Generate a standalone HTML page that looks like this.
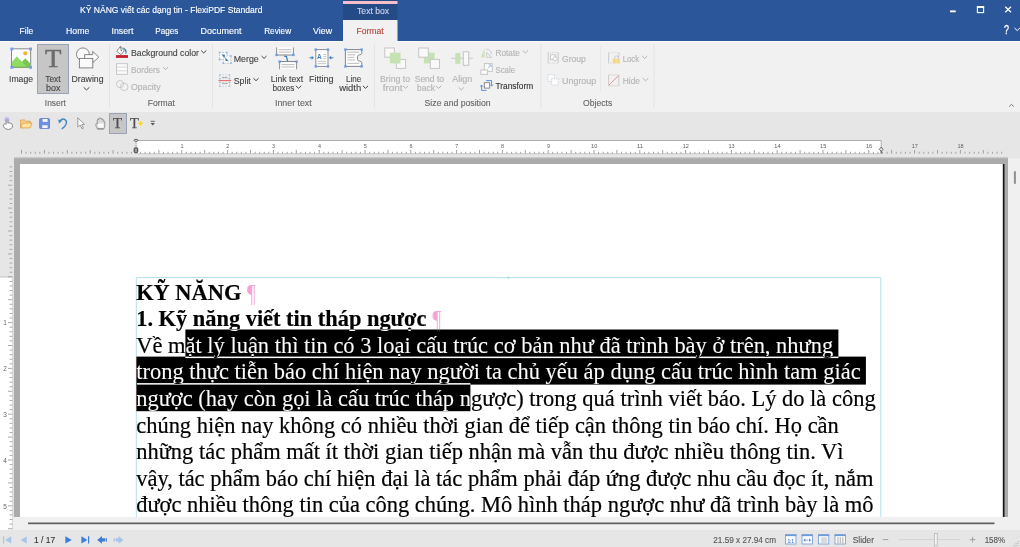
<!DOCTYPE html>
<html lang="vi">
<head>
<meta charset="utf-8">
<title>KỸ NĂNG viết các dạng tin - FlexiPDF Standard</title>
<style>
html,body{margin:0;padding:0;background:#e6e6e6;overflow:hidden}
body{width:1020px;height:547px;font-family:'Liberation Sans', Arial, sans-serif}
svg{display:block;font-family:'Liberation Sans', Arial, sans-serif}
</style>
</head>
<body>
<svg width="1020" height="547" viewBox="0 0 1020 547">
<g id="backgrounds">
<rect x="0" y="0" width="1020" height="547" fill="#e6e6e6"/>
<rect x="0" y="0" width="1020" height="41" fill="#2b579a"/>
<rect x="0" y="41" width="1020" height="71" fill="#f1f1f1"/>
<rect x="0" y="41" width="1020" height="1" fill="#fafafa"/>
</g>
<g id="titlebar">
<rect x="343" y="0" width="54.5" height="20" fill="#254b87"/>
<rect x="343" y="1" width="54.5" height="3" fill="#f4bfca"/>
<rect x="343" y="20" width="54.5" height="22" fill="#f1f1f1"/>
<text x="80.00" y="13.25" font-size="8.6" fill="#ffffff" stroke="#ffffff" stroke-width="0.12" font-weight="normal" textLength="182.40" lengthAdjust="spacingAndGlyphs">KỸ NĂNG viết các dạng tin - FlexiPDF Standard</text>
<text x="357.00" y="13.90" font-size="8.8" fill="#d3d6ee" stroke="#d3d6ee" stroke-width="0.12" font-weight="normal" textLength="32.20" lengthAdjust="spacingAndGlyphs">Text box</text>
<rect x="950.1" y="10.4" width="5.6" height="1.9" fill="#ffffff"/>
<rect x="977.4" y="7.2" width="6.2" height="5.4" fill="none" stroke="#fff" stroke-width="1.1"/>
<rect x="976.85" y="6.0" width="7.3" height="1.8" fill="#ffffff"/>
<path d="M1005.3 6.8 L1011 12.3 M1011 6.8 L1005.3 12.3" stroke="#fff" stroke-width="1.3" fill="none"/>
<text x="1004.00" y="34.40" font-size="12.5" fill="#ffffff" stroke="#ffffff" stroke-width="0.3" font-weight="normal" textLength="5.00" lengthAdjust="spacingAndGlyphs">?</text>
<path d="M1014.80 28.26 L1017.20 30.54 L1019.60 28.26" fill="none" stroke="#ffffff" stroke-width="1.0" stroke-linecap="round" stroke-linejoin="round"/>
</g>
<g id="tabs">
<text x="19.60" y="34.40" font-size="8.8" fill="#ffffff" stroke="#ffffff" stroke-width="0.12" font-weight="normal" textLength="13.70" lengthAdjust="spacingAndGlyphs">File</text>
<text x="66.10" y="34.40" font-size="8.8" fill="#ffffff" stroke="#ffffff" stroke-width="0.12" font-weight="normal" textLength="23.20" lengthAdjust="spacingAndGlyphs">Home</text>
<text x="111.50" y="34.40" font-size="8.8" fill="#ffffff" stroke="#ffffff" stroke-width="0.12" font-weight="normal" textLength="21.90" lengthAdjust="spacingAndGlyphs">Insert</text>
<text x="155.30" y="34.40" font-size="8.8" fill="#ffffff" stroke="#ffffff" stroke-width="0.12" font-weight="normal" textLength="23.10" lengthAdjust="spacingAndGlyphs">Pages</text>
<text x="200.60" y="34.40" font-size="8.8" fill="#ffffff" stroke="#ffffff" stroke-width="0.12" font-weight="normal" textLength="40.90" lengthAdjust="spacingAndGlyphs">Document</text>
<text x="264.20" y="34.40" font-size="8.8" fill="#ffffff" stroke="#ffffff" stroke-width="0.12" font-weight="normal" textLength="26.90" lengthAdjust="spacingAndGlyphs">Review</text>
<text x="313.10" y="34.40" font-size="8.8" fill="#ffffff" stroke="#ffffff" stroke-width="0.12" font-weight="normal" textLength="19.00" lengthAdjust="spacingAndGlyphs">View</text>
<text x="356.40" y="34.20" font-size="8.8" fill="#b5453c" stroke="#b5453c" stroke-width="0.12" font-weight="normal" textLength="27.40" lengthAdjust="spacingAndGlyphs">Format</text>
</g>
<g id="ribbon">
<line x1="109.5" y1="44" x2="109.5" y2="108" stroke="#e4e4e4" stroke-width="1"/>
<line x1="212.5" y1="44" x2="212.5" y2="108" stroke="#e4e4e4" stroke-width="1"/>
<line x1="374.4" y1="44" x2="374.4" y2="108" stroke="#e4e4e4" stroke-width="1"/>
<line x1="540.8" y1="44" x2="540.8" y2="108" stroke="#e4e4e4" stroke-width="1"/>
<line x1="654.0" y1="44" x2="654.0" y2="108" stroke="#e4e4e4" stroke-width="1"/>
<line x1="600.6" y1="46" x2="600.6" y2="91" stroke="#e6e6e6" stroke-width="1"/>
<rect x="37.5" y="44.5" width="31" height="49" fill="#c6c6c6" stroke="#9ba4b7" stroke-width="1"/>
<text x="9.00" y="82.20" font-size="8.7" fill="#444444" stroke="#444444" stroke-width="0.12" font-weight="normal" textLength="24.00" lengthAdjust="spacingAndGlyphs">Image</text>
<text x="45.20" y="82.20" font-size="8.7" fill="#444444" stroke="#444444" stroke-width="0.12" font-weight="normal" textLength="15.50" lengthAdjust="spacingAndGlyphs">Text</text>
<text x="46.00" y="91.00" font-size="8.7" fill="#444444" stroke="#444444" stroke-width="0.12" font-weight="normal" textLength="14.40" lengthAdjust="spacingAndGlyphs">box</text>
<text x="71.60" y="82.20" font-size="8.7" fill="#444444" stroke="#444444" stroke-width="0.12" font-weight="normal" textLength="31.90" lengthAdjust="spacingAndGlyphs">Drawing</text>
<path d="M84.00 87.61 L86.50 89.99 L89.00 87.61" fill="none" stroke="#444444" stroke-width="1.0" stroke-linecap="round" stroke-linejoin="round"/>
<text x="44.80" y="106.10" font-size="8.7" fill="#666666" stroke="#666666" stroke-width="0.12" font-weight="normal" textLength="21.00" lengthAdjust="spacingAndGlyphs">Insert</text>
<text x="131.00" y="55.80" font-size="8.7" fill="#444444" stroke="#444444" stroke-width="0.12" font-weight="normal" textLength="68.00" lengthAdjust="spacingAndGlyphs">Background color</text>
<path d="M201.40 50.81 L203.70 52.99 L206.00 50.81" fill="none" stroke="#444444" stroke-width="1.0" stroke-linecap="round" stroke-linejoin="round"/>
<text x="131.00" y="72.60" font-size="8.7" fill="#b3b3b3" stroke="#b3b3b3" stroke-width="0.12" font-weight="normal" textLength="29.00" lengthAdjust="spacingAndGlyphs">Borders</text>
<path d="M163.40 67.50 L165.50 69.50 L167.60 67.50" fill="none" stroke="#b3b3b3" stroke-width="1.0" stroke-linecap="round" stroke-linejoin="round"/>
<text x="131.00" y="89.70" font-size="8.7" fill="#b3b3b3" stroke="#b3b3b3" stroke-width="0.12" font-weight="normal" textLength="29.50" lengthAdjust="spacingAndGlyphs">Opacity</text>
<text x="147.80" y="106.10" font-size="8.7" fill="#666666" stroke="#666666" stroke-width="0.12" font-weight="normal" textLength="27.00" lengthAdjust="spacingAndGlyphs">Format</text>
<text x="233.70" y="61.60" font-size="8.7" fill="#444444" stroke="#444444" stroke-width="0.12" font-weight="normal" textLength="25.00" lengthAdjust="spacingAndGlyphs">Merge</text>
<path d="M261.90 56.38 L264.05 58.42 L266.20 56.38" fill="none" stroke="#444444" stroke-width="1.0" stroke-linecap="round" stroke-linejoin="round"/>
<text x="233.70" y="83.80" font-size="8.7" fill="#444444" stroke="#444444" stroke-width="0.12" font-weight="normal" textLength="17.10" lengthAdjust="spacingAndGlyphs">Split</text>
<path d="M253.70 78.51 L256.00 80.69 L258.30 78.51" fill="none" stroke="#444444" stroke-width="1.0" stroke-linecap="round" stroke-linejoin="round"/>
<text x="270.80" y="82.20" font-size="8.7" fill="#444444" stroke="#444444" stroke-width="0.12" font-weight="normal" textLength="32.30" lengthAdjust="spacingAndGlyphs">Link text</text>
<text x="272.40" y="91.00" font-size="8.7" fill="#444444" stroke="#444444" stroke-width="0.12" font-weight="normal" textLength="22.10" lengthAdjust="spacingAndGlyphs">boxes</text>
<path d="M296.10 86.06 L298.50 88.34 L300.90 86.06" fill="none" stroke="#444444" stroke-width="1.0" stroke-linecap="round" stroke-linejoin="round"/>
<text x="309.00" y="82.20" font-size="8.7" fill="#444444" stroke="#444444" stroke-width="0.12" font-weight="normal" textLength="24.60" lengthAdjust="spacingAndGlyphs">Fitting</text>
<text x="346.00" y="82.20" font-size="8.7" fill="#444444" stroke="#444444" stroke-width="0.12" font-weight="normal" textLength="15.20" lengthAdjust="spacingAndGlyphs">Line</text>
<text x="339.20" y="91.00" font-size="8.7" fill="#444444" stroke="#444444" stroke-width="0.12" font-weight="normal" textLength="22.00" lengthAdjust="spacingAndGlyphs">width</text>
<path d="M363.20 86.11 L365.50 88.29 L367.80 86.11" fill="none" stroke="#444444" stroke-width="1.0" stroke-linecap="round" stroke-linejoin="round"/>
<text x="275.00" y="106.10" font-size="8.7" fill="#666666" stroke="#666666" stroke-width="0.12" font-weight="normal" textLength="36.70" lengthAdjust="spacingAndGlyphs">Inner text</text>
<text x="380.00" y="82.20" font-size="8.7" fill="#b3b3b3" stroke="#b3b3b3" stroke-width="0.12" font-weight="normal" textLength="30.00" lengthAdjust="spacingAndGlyphs">Bring to</text>
<text x="382.70" y="91.00" font-size="8.7" fill="#b3b3b3" stroke="#b3b3b3" stroke-width="0.12" font-weight="normal" textLength="19.80" lengthAdjust="spacingAndGlyphs">front</text>
<path d="M403.40 86.18 L405.55 88.22 L407.70 86.18" fill="none" stroke="#b3b3b3" stroke-width="1.0" stroke-linecap="round" stroke-linejoin="round"/>
<text x="414.70" y="82.20" font-size="8.7" fill="#b3b3b3" stroke="#b3b3b3" stroke-width="0.12" font-weight="normal" textLength="29.40" lengthAdjust="spacingAndGlyphs">Send to</text>
<text x="417.10" y="91.00" font-size="8.7" fill="#b3b3b3" stroke="#b3b3b3" stroke-width="0.12" font-weight="normal" textLength="17.80" lengthAdjust="spacingAndGlyphs">back</text>
<path d="M436.20 86.06 L438.60 88.34 L441.00 86.06" fill="none" stroke="#b3b3b3" stroke-width="1.0" stroke-linecap="round" stroke-linejoin="round"/>
<text x="452.30" y="82.20" font-size="8.7" fill="#b3b3b3" stroke="#b3b3b3" stroke-width="0.12" font-weight="normal" textLength="19.90" lengthAdjust="spacingAndGlyphs">Align</text>
<path d="M458.90 87.68 L461.25 89.92 L463.60 87.68" fill="none" stroke="#b3b3b3" stroke-width="1.0" stroke-linecap="round" stroke-linejoin="round"/>
<text x="495.50" y="55.80" font-size="8.7" fill="#b3b3b3" stroke="#b3b3b3" stroke-width="0.12" font-weight="normal" textLength="24.30" lengthAdjust="spacingAndGlyphs">Rotate</text>
<path d="M523.00 50.78 L525.35 53.02 L527.70 50.78" fill="none" stroke="#b3b3b3" stroke-width="1.0" stroke-linecap="round" stroke-linejoin="round"/>
<text x="495.50" y="72.60" font-size="8.7" fill="#b3b3b3" stroke="#b3b3b3" stroke-width="0.12" font-weight="normal" textLength="19.50" lengthAdjust="spacingAndGlyphs">Scale</text>
<text x="495.50" y="89.30" font-size="8.7" fill="#333" stroke="#333" stroke-width="0.12" font-weight="normal" textLength="37.70" lengthAdjust="spacingAndGlyphs">Transform</text>
<text x="424.60" y="106.10" font-size="8.7" fill="#666666" stroke="#666666" stroke-width="0.12" font-weight="normal" textLength="66.00" lengthAdjust="spacingAndGlyphs">Size and position</text>
<text x="562.10" y="61.60" font-size="8.7" fill="#b3b3b3" stroke="#b3b3b3" stroke-width="0.12" font-weight="normal" textLength="23.70" lengthAdjust="spacingAndGlyphs">Group</text>
<text x="562.10" y="83.80" font-size="8.7" fill="#b3b3b3" stroke="#b3b3b3" stroke-width="0.12" font-weight="normal" textLength="34.10" lengthAdjust="spacingAndGlyphs">Ungroup</text>
<text x="622.70" y="61.60" font-size="8.7" fill="#b3b3b3" stroke="#b3b3b3" stroke-width="0.12" font-weight="normal" textLength="16.50" lengthAdjust="spacingAndGlyphs">Lock</text>
<path d="M642.50 56.33 L644.75 58.47 L647.00 56.33" fill="none" stroke="#b3b3b3" stroke-width="1.0" stroke-linecap="round" stroke-linejoin="round"/>
<text x="622.70" y="83.80" font-size="8.7" fill="#b3b3b3" stroke="#b3b3b3" stroke-width="0.12" font-weight="normal" textLength="17.30" lengthAdjust="spacingAndGlyphs">Hide</text>
<path d="M643.00 78.41 L645.50 80.79 L648.00 78.41" fill="none" stroke="#b3b3b3" stroke-width="1.0" stroke-linecap="round" stroke-linejoin="round"/>
<text x="583.00" y="106.10" font-size="8.7" fill="#666666" stroke="#666666" stroke-width="0.12" font-weight="normal" textLength="29.20" lengthAdjust="spacingAndGlyphs">Objects</text>
<path d="M1009.2 106.6 L1011.5 104.4 L1013.8 106.6" fill="none" stroke="#666" stroke-width="0.9"/>
</g>
<g id="quickbar">
<rect x="109.5" y="113.5" width="17" height="20" fill="#c6c6c6" stroke="#9ba4b7" stroke-width="1"/>
</g>
<g id="rulers">
<rect x="137.3" y="140.5" width="743.9" height="13.2" fill="#ffffff"/>
<path d="M137.3 140.5 H881.2 V153.7" fill="none" stroke="#9a9a9a" stroke-width="0.8"/>
<path d="M137.3 153.7 H881.2" fill="none" stroke="#b4b4b4" stroke-width="0.7"/>
<path d="M21.50 150.0V153.6M26.08 151.8V153.6M30.66 151.8V153.6M35.24 151.8V153.6M39.82 151.8V153.6M44.40 150.0V153.6M48.98 151.8V153.6M53.56 151.8V153.6M58.14 151.8V153.6M62.72 151.8V153.6M67.30 150.0V153.6M71.88 151.8V153.6M76.46 151.8V153.6M81.04 151.8V153.6M85.62 151.8V153.6M90.20 150.0V153.6M94.78 151.8V153.6M99.36 151.8V153.6M103.94 151.8V153.6M108.52 151.8V153.6M113.10 150.0V153.6M117.68 151.8V153.6M122.26 151.8V153.6M126.84 151.8V153.6M131.42 151.8V153.6M136.00 150.0V153.6M140.58 151.8V153.6M145.16 151.8V153.6M149.74 151.8V153.6M154.32 151.8V153.6M158.90 150.0V153.6M163.48 151.8V153.6M168.06 151.8V153.6M172.64 151.8V153.6M177.22 151.8V153.6M181.80 150.0V153.6M186.38 151.8V153.6M190.96 151.8V153.6M195.54 151.8V153.6M200.12 151.8V153.6M204.70 150.0V153.6M209.28 151.8V153.6M213.86 151.8V153.6M218.44 151.8V153.6M223.02 151.8V153.6M227.60 150.0V153.6M232.18 151.8V153.6M236.76 151.8V153.6M241.34 151.8V153.6M245.92 151.8V153.6M250.50 150.0V153.6M255.08 151.8V153.6M259.66 151.8V153.6M264.24 151.8V153.6M268.82 151.8V153.6M273.40 150.0V153.6M277.98 151.8V153.6M282.56 151.8V153.6M287.14 151.8V153.6M291.72 151.8V153.6M296.30 150.0V153.6M300.88 151.8V153.6M305.46 151.8V153.6M310.04 151.8V153.6M314.62 151.8V153.6M319.20 150.0V153.6M323.78 151.8V153.6M328.36 151.8V153.6M332.94 151.8V153.6M337.52 151.8V153.6M342.10 150.0V153.6M346.68 151.8V153.6M351.26 151.8V153.6M355.84 151.8V153.6M360.42 151.8V153.6M365.00 150.0V153.6M369.58 151.8V153.6M374.16 151.8V153.6M378.74 151.8V153.6M383.32 151.8V153.6M387.90 150.0V153.6M392.48 151.8V153.6M397.06 151.8V153.6M401.64 151.8V153.6M406.22 151.8V153.6M410.80 150.0V153.6M415.38 151.8V153.6M419.96 151.8V153.6M424.54 151.8V153.6M429.12 151.8V153.6M433.70 150.0V153.6M438.28 151.8V153.6M442.86 151.8V153.6M447.44 151.8V153.6M452.02 151.8V153.6M456.60 150.0V153.6M461.18 151.8V153.6M465.76 151.8V153.6M470.34 151.8V153.6M474.92 151.8V153.6M479.50 150.0V153.6M484.08 151.8V153.6M488.66 151.8V153.6M493.24 151.8V153.6M497.82 151.8V153.6M502.40 150.0V153.6M506.98 151.8V153.6M511.56 151.8V153.6M516.14 151.8V153.6M520.72 151.8V153.6M525.30 150.0V153.6M529.88 151.8V153.6M534.46 151.8V153.6M539.04 151.8V153.6M543.62 151.8V153.6M548.20 150.0V153.6M552.78 151.8V153.6M557.36 151.8V153.6M561.94 151.8V153.6M566.52 151.8V153.6M571.10 150.0V153.6M575.68 151.8V153.6M580.26 151.8V153.6M584.84 151.8V153.6M589.42 151.8V153.6M594.00 150.0V153.6M598.58 151.8V153.6M603.16 151.8V153.6M607.74 151.8V153.6M612.32 151.8V153.6M616.90 150.0V153.6M621.48 151.8V153.6M626.06 151.8V153.6M630.64 151.8V153.6M635.22 151.8V153.6M639.80 150.0V153.6M644.38 151.8V153.6M648.96 151.8V153.6M653.54 151.8V153.6M658.12 151.8V153.6M662.70 150.0V153.6M667.28 151.8V153.6M671.86 151.8V153.6M676.44 151.8V153.6M681.02 151.8V153.6M685.60 150.0V153.6M690.18 151.8V153.6M694.76 151.8V153.6M699.34 151.8V153.6M703.92 151.8V153.6M708.50 150.0V153.6M713.08 151.8V153.6M717.66 151.8V153.6M722.24 151.8V153.6M726.82 151.8V153.6M731.40 150.0V153.6M735.98 151.8V153.6M740.56 151.8V153.6M745.14 151.8V153.6M749.72 151.8V153.6M754.30 150.0V153.6M758.88 151.8V153.6M763.46 151.8V153.6M768.04 151.8V153.6M772.62 151.8V153.6M777.20 150.0V153.6M781.78 151.8V153.6M786.36 151.8V153.6M790.94 151.8V153.6M795.52 151.8V153.6M800.10 150.0V153.6M804.68 151.8V153.6M809.26 151.8V153.6M813.84 151.8V153.6M818.42 151.8V153.6M823.00 150.0V153.6M827.58 151.8V153.6M832.16 151.8V153.6M836.74 151.8V153.6M841.32 151.8V153.6M845.90 150.0V153.6M850.48 151.8V153.6M855.06 151.8V153.6M859.64 151.8V153.6M864.22 151.8V153.6M868.80 150.0V153.6M873.38 151.8V153.6M877.96 151.8V153.6M882.54 151.8V153.6M887.12 151.8V153.6M891.70 150.0V153.6M896.28 151.8V153.6M900.86 151.8V153.6M905.44 151.8V153.6M910.02 151.8V153.6M914.60 150.0V153.6M919.18 151.8V153.6M923.76 151.8V153.6M928.34 151.8V153.6M932.92 151.8V153.6M937.50 150.0V153.6M942.08 151.8V153.6M946.66 151.8V153.6M951.24 151.8V153.6M955.82 151.8V153.6M960.40 150.0V153.6M964.98 151.8V153.6M969.56 151.8V153.6M974.14 151.8V153.6M978.72 151.8V153.6M983.30 150.0V153.6M987.88 151.8V153.6M992.46 151.8V153.6M997.04 151.8V153.6M1001.62 151.8V153.6" stroke="#959595" stroke-width="0.9" fill="none"/>
<text x="180.50" y="148.20" font-size="6.2" fill="#5c5c5c" font-weight="normal" textLength="3.00" lengthAdjust="spacingAndGlyphs">1</text>
<text x="226.30" y="148.20" font-size="6.2" fill="#5c5c5c" font-weight="normal" textLength="3.00" lengthAdjust="spacingAndGlyphs">2</text>
<text x="272.10" y="148.20" font-size="6.2" fill="#5c5c5c" font-weight="normal" textLength="3.00" lengthAdjust="spacingAndGlyphs">3</text>
<text x="317.90" y="148.20" font-size="6.2" fill="#5c5c5c" font-weight="normal" textLength="3.00" lengthAdjust="spacingAndGlyphs">4</text>
<text x="363.70" y="148.20" font-size="6.2" fill="#5c5c5c" font-weight="normal" textLength="3.00" lengthAdjust="spacingAndGlyphs">5</text>
<text x="409.50" y="148.20" font-size="6.2" fill="#5c5c5c" font-weight="normal" textLength="3.00" lengthAdjust="spacingAndGlyphs">6</text>
<text x="455.30" y="148.20" font-size="6.2" fill="#5c5c5c" font-weight="normal" textLength="3.00" lengthAdjust="spacingAndGlyphs">7</text>
<text x="501.10" y="148.20" font-size="6.2" fill="#5c5c5c" font-weight="normal" textLength="3.00" lengthAdjust="spacingAndGlyphs">8</text>
<text x="546.90" y="148.20" font-size="6.2" fill="#5c5c5c" font-weight="normal" textLength="3.00" lengthAdjust="spacingAndGlyphs">9</text>
<text x="591.10" y="148.20" font-size="6.2" fill="#5c5c5c" font-weight="normal" textLength="6.20" lengthAdjust="spacingAndGlyphs">10</text>
<text x="636.90" y="148.20" font-size="6.2" fill="#5c5c5c" font-weight="normal" textLength="6.20" lengthAdjust="spacingAndGlyphs">11</text>
<text x="682.70" y="148.20" font-size="6.2" fill="#5c5c5c" font-weight="normal" textLength="6.20" lengthAdjust="spacingAndGlyphs">12</text>
<text x="728.50" y="148.20" font-size="6.2" fill="#5c5c5c" font-weight="normal" textLength="6.20" lengthAdjust="spacingAndGlyphs">13</text>
<text x="774.30" y="148.20" font-size="6.2" fill="#5c5c5c" font-weight="normal" textLength="6.20" lengthAdjust="spacingAndGlyphs">14</text>
<text x="820.10" y="148.20" font-size="6.2" fill="#5c5c5c" font-weight="normal" textLength="6.20" lengthAdjust="spacingAndGlyphs">15</text>
<text x="865.90" y="148.20" font-size="6.2" fill="#5c5c5c" font-weight="normal" textLength="6.20" lengthAdjust="spacingAndGlyphs">16</text>
<text x="911.70" y="148.20" font-size="6.2" fill="#5c5c5c" font-weight="normal" textLength="6.20" lengthAdjust="spacingAndGlyphs">17</text>
<text x="957.50" y="148.20" font-size="6.2" fill="#5c5c5c" font-weight="normal" textLength="6.20" lengthAdjust="spacingAndGlyphs">18</text>
<rect x="0" y="277" width="12.5" height="253" fill="#ffffff"/>
<line x1="12.7" y1="277" x2="12.7" y2="530" stroke="#c9c9c9" stroke-width="0.8"/>
<line x1="0" y1="277" x2="12.7" y2="277" stroke="#b5b5b5" stroke-width="0.8"/>
<path d="M9.6 166.88H12.3M9.6 171.46H12.3M9.6 176.04H12.3M9.6 180.62H12.3M8.0 185.20H12.3M9.6 189.78H12.3M9.6 194.36H12.3M9.6 198.94H12.3M9.6 203.52H12.3M8.0 208.10H12.3M9.6 212.68H12.3M9.6 217.26H12.3M9.6 221.84H12.3M9.6 226.42H12.3M8.0 231.00H12.3M9.6 235.58H12.3M9.6 240.16H12.3M9.6 244.74H12.3M9.6 249.32H12.3M8.0 253.90H12.3M9.6 258.48H12.3M9.6 263.06H12.3M9.6 267.64H12.3M9.6 272.22H12.3M8.0 276.80H12.3M9.6 281.38H12.3M9.6 285.96H12.3M9.6 290.54H12.3M9.6 295.12H12.3M8.0 299.70H12.3M9.6 304.28H12.3M9.6 308.86H12.3M9.6 313.44H12.3M9.6 318.02H12.3M8.0 322.60H12.3M9.6 327.18H12.3M9.6 331.76H12.3M9.6 336.34H12.3M9.6 340.92H12.3M8.0 345.50H12.3M9.6 350.08H12.3M9.6 354.66H12.3M9.6 359.24H12.3M9.6 363.82H12.3M8.0 368.40H12.3M9.6 372.98H12.3M9.6 377.56H12.3M9.6 382.14H12.3M9.6 386.72H12.3M8.0 391.30H12.3M9.6 395.88H12.3M9.6 400.46H12.3M9.6 405.04H12.3M9.6 409.62H12.3M8.0 414.20H12.3M9.6 418.78H12.3M9.6 423.36H12.3M9.6 427.94H12.3M9.6 432.52H12.3M8.0 437.10H12.3M9.6 441.68H12.3M9.6 446.26H12.3M9.6 450.84H12.3M9.6 455.42H12.3M8.0 460.00H12.3M9.6 464.58H12.3M9.6 469.16H12.3M9.6 473.74H12.3M9.6 478.32H12.3M8.0 482.90H12.3M9.6 487.48H12.3M9.6 492.06H12.3M9.6 496.64H12.3M9.6 501.22H12.3M8.0 505.80H12.3M9.6 510.38H12.3M9.6 514.96H12.3M9.6 519.54H12.3M9.6 524.12H12.3M8.0 528.70H12.3" stroke="#a0a0a0" stroke-width="0.9" fill="none"/>
<text x="3.20" y="325.30" font-size="6.6" fill="#666" font-weight="normal" textLength="3.60" lengthAdjust="spacingAndGlyphs">1</text>
<text x="3.20" y="371.10" font-size="6.6" fill="#666" font-weight="normal" textLength="3.60" lengthAdjust="spacingAndGlyphs">2</text>
<text x="3.20" y="416.90" font-size="6.6" fill="#666" font-weight="normal" textLength="3.60" lengthAdjust="spacingAndGlyphs">3</text>
<text x="3.20" y="462.70" font-size="6.6" fill="#666" font-weight="normal" textLength="3.60" lengthAdjust="spacingAndGlyphs">4</text>
<text x="3.20" y="508.50" font-size="6.6" fill="#666" font-weight="normal" textLength="3.60" lengthAdjust="spacingAndGlyphs">5</text>
</g>
<g id="document">
<rect x="14" y="157.5" width="994" height="360" fill="#ababab"/>
<rect x="14" y="157.5" width="994" height="0.8" fill="#c9c9c9"/>
<rect x="20" y="164" width="983" height="353" fill="#ffffff"/>
<rect x="1002.8" y="164" width="1.7" height="353" fill="#161616"/>
<rect x="1008" y="158.5" width="12" height="372" fill="#f0f0f0"/>
<rect x="1013.9" y="171.2" width="2.0" height="12.6" fill="#8f8f8f"/>
<rect x="13.2" y="517" width="1007" height="13" fill="#f0f0f0"/>
<rect x="28" y="522.5" width="966.5" height="1.7" fill="#5e5e5e"/>
<path d="M136.3 517 V277.6 H880.8 V517" fill="none" stroke="#b5e0e8" stroke-width="1"/>
<circle cx="508.5" cy="277.6" r="1.3" fill="#b5e0e8"/>
</g>
<g id="doctext" font-family="'Liberation Serif', 'Times New Roman', serif" font-size="22.475" fill="#000" stroke="#000" stroke-width="0.18">
<text x="136.2" y="300.4" font-weight="bold" font-size="22.4" xml:space="preserve">KỸ NĂNG</text>
<text transform="translate(247.0 301.50) scale(0.86 1.1)" fill="#f5a3d6" stroke="none">¶</text>
<text x="136.2" y="326.1" font-weight="bold" font-size="22.4" xml:space="preserve">1. Kỹ năng viết tin tháp ngược</text>
<text transform="translate(432.4 327.90) scale(0.86 1.1)" fill="#f5a3d6" stroke="none">¶</text>
<text x="136.2" y="352.8" font-weight="normal" xml:space="preserve">Về mặt lý luận thì tin có 3 loại cấu trúc cơ bản như đã trình bày ở trên, nhưng</text>
<text x="136.2" y="379.4" font-weight="normal" xml:space="preserve">trong thực tiễn báo chí hiện nay người ta chủ yếu áp dụng cấu trúc hình tam giác</text>
<text x="136.2" y="406.0" font-weight="normal" xml:space="preserve">ngược (hay còn gọi là cấu trúc tháp ngược) trong quá trình viết báo. Lý do là công</text>
<text x="136.2" y="432.6" font-weight="normal" xml:space="preserve">chúng hiện nay không có nhiều thời gian để tiếp cận thông tin báo chí. Họ cần</text>
<text x="136.2" y="459.2" font-weight="normal" xml:space="preserve">những tác phẩm mất ít thời gian tiếp nhận mà vẫn thu được nhiều thông tin. Vì</text>
<text x="136.2" y="485.7" font-weight="normal" xml:space="preserve">vậy, tác phẩm báo chí hiện đại là tác phẩm phải đáp ứng được nhu cầu đọc ít, nắm</text>
<text x="136.2" y="512.3" font-weight="normal" xml:space="preserve">được nhiều thông tin của công chúng. Mô hình tháp ngược như đã trình bày là mô</text>
</g>
<g id="selection" fill="#fff" style="mix-blend-mode:difference">
<rect x="185.4" y="329.5" width="653.0" height="28.6" style="mix-blend-mode:difference"/>
<rect x="136.3" y="356.6" width="729.6" height="28.0" style="mix-blend-mode:difference"/>
<rect x="136.3" y="383.1" width="334.1" height="28.1" style="mix-blend-mode:difference"/>
</g>
<g id="bottom">
<rect x="13.2" y="517" width="1007" height="13" fill="#f0f0f0"/>
<rect x="28" y="522.5" width="966.5" height="1.7" fill="#5e5e5e"/>
<rect x="0" y="530" width="1020" height="17" fill="#e6e6e6"/>
<text x="34.00" y="543.10" font-size="8.4" fill="#333" stroke="#333" stroke-width="0.12" font-weight="normal" textLength="21.20" lengthAdjust="spacingAndGlyphs">1 / 17</text>
<text x="713.30" y="543.10" font-size="8.4" fill="#555" stroke="#555" stroke-width="0.12" font-weight="normal" textLength="62.70" lengthAdjust="spacingAndGlyphs">21.59 x 27.94 cm</text>
<text x="852.80" y="543.10" font-size="8.4" fill="#555" stroke="#555" stroke-width="0.12" font-weight="normal" textLength="21.20" lengthAdjust="spacingAndGlyphs">Slider</text>
<text x="984.70" y="543.10" font-size="8.4" fill="#555" stroke="#555" stroke-width="0.12" font-weight="normal" textLength="20.40" lengthAdjust="spacingAndGlyphs">158%</text>
</g>
<g id="icons">
<rect x="11.5" y="48.8" width="19.2" height="18.6" fill="#fff" stroke="#8a8a8a" stroke-width="1"/>
<path d="M12 67 L12 62 L16.9 56.2 L22 62 L25.3 58.6 L30.2 63.6 L30.2 67 Z" fill="#8fdc62"/>
<path d="M22 62 L25.3 58.6 L30.2 63.6 L30.2 67 L27 67 Z" fill="#79c653"/>
<rect x="12.5" y="66.6" width="17.5" height="1" fill="#78b85a"/>
<circle cx="25.3" cy="53.3" r="2.1" fill="#f6b23c"/>
<rect x="10.35" y="47.55" width="2.9" height="2.9" fill="#739fe6"/>
<rect x="29.05" y="47.55" width="2.9" height="2.9" fill="#739fe6"/>
<rect x="10.35" y="65.85" width="2.9" height="2.9" fill="#739fe6"/>
<rect x="29.05" y="65.85" width="2.9" height="2.9" fill="#739fe6"/>
<text x="45.0" y="66.7" font-family="'Liberation Serif', serif" font-size="25.6" fill="#6c6c6c" stroke="#6c6c6c" stroke-width="0.55" textLength="16.4" lengthAdjust="spacingAndGlyphs">T</text>
<circle cx="82.9" cy="54.3" r="6.4" fill="#fafafa" stroke="#7a7a7a" stroke-width="0.9"/>
<path d="M84.6 54.6 H92.7 V51.4 L98.8 57.1 L92.7 62.8 V59.6 H84.6 Z" fill="#fafafa" stroke="#7a7a7a" stroke-width="0.9" stroke-linejoin="miter"/>
<rect x="79.4" y="58.4" width="13.4" height="9.5" fill="#fafafa" stroke="#7a7a7a" stroke-width="0.9"/>
<rect x="116.0" y="55.1" width="12.0" height="2.8" fill="#c5202f"/>
<path d="M122.4 47.5 C126.2 48.2 128.0 51.4 125.6 54.6 C125.8 51.8 124.9 49.7 122.4 47.5 Z" fill="#3f7fc4"/>
<path d="M120.4 46.4 L124.2 50.8 L121.0 54.7 L116.8 51.3 Z" fill="#fff" stroke="#6f6f6f" stroke-width="0.8" stroke-linejoin="round"/>
<path d="M120.4 46.4 L121.2 50.2" fill="none" stroke="#6f6f6f" stroke-width="0.8"/>
<circle cx="121.3" cy="50.6" r="0.6" fill="#555"/>
<rect x="116.5" y="63.7" width="11.0" height="10.6" fill="#fbfbfb" stroke="#c2c2c2" stroke-width="0.9"/>
<path d="M116.5 67.1 H127.5 M116.5 70.8 H127.5" stroke="#cfcfcf" stroke-width="0.8"/>
<circle cx="120.0" cy="84.1" r="3.6" fill="none" stroke="#c6c6c6" stroke-width="0.9"/>
<circle cx="124.2" cy="86.9" r="3.8" fill="none" stroke="#c6c6c6" stroke-width="0.9"/>
<rect x="219.5" y="52.5" width="7.4" height="7.0" fill="#fbfbfb" stroke="#a9b3c4" stroke-width="0.8" stroke-dasharray="1.6 1.2"/>
<rect x="223.3" y="56.0" width="7.6" height="7.2" fill="#fbfbfb" stroke="#a9b3c4" stroke-width="0.8" stroke-dasharray="1.6 1.2"/>
<rect x="218.7" y="51.7" width="1.6" height="1.6" fill="#8db4ee"/>
<rect x="226.1" y="51.7" width="1.6" height="1.6" fill="#8db4ee"/>
<rect x="218.7" y="58.7" width="1.6" height="1.6" fill="#8db4ee"/>
<rect x="230.1" y="55.2" width="1.6" height="1.6" fill="#8db4ee"/>
<rect x="222.5" y="62.4" width="1.6" height="1.6" fill="#8db4ee"/>
<rect x="230.1" y="62.4" width="1.6" height="1.6" fill="#8db4ee"/>
<path d="M221.6 54.2 L224.6 57.2 L224.8 54.8 L222.2 54.4 Z" fill="#2f6f96"/>
<path d="M228.6 61.4 L225.6 58.4 L225.4 60.8 L228.0 61.2 Z" fill="#2f6f96"/>
<path d="M222.0 54.6 L228.2 61.0" stroke="#2f6f96" stroke-width="0.7"/>
<rect x="219.8" y="75.0" width="9.8" height="3.6" fill="#f8f8f8" stroke="#b4bccb" stroke-width="0.7" stroke-dasharray="1.5 1.2"/>
<rect x="219.8" y="82.6" width="9.8" height="3.6" fill="#f8f8f8" stroke="#b4bccb" stroke-width="0.7" stroke-dasharray="1.5 1.2"/>
<path d="M221.8 77.4 H227.8 M221.8 83.6 H227.8" stroke="#b3b3b3" stroke-width="1.4"/>
<rect x="219.1" y="74.3" width="1.4" height="1.4" fill="#9dbcec"/>
<rect x="228.9" y="74.3" width="1.4" height="1.4" fill="#9dbcec"/>
<rect x="219.1" y="85.5" width="1.4" height="1.4" fill="#9dbcec"/>
<rect x="228.9" y="85.5" width="1.4" height="1.4" fill="#9dbcec"/>
<rect x="219.1" y="78.1" width="1.4" height="1.4" fill="#9dbcec"/>
<rect x="228.9" y="78.1" width="1.4" height="1.4" fill="#9dbcec"/>
<rect x="219.1" y="81.7" width="1.4" height="1.4" fill="#9dbcec"/>
<rect x="228.9" y="81.7" width="1.4" height="1.4" fill="#9dbcec"/>
<path d="M218.5 80.6 H231.2" stroke="#e26d6d" stroke-width="1.1"/>
<rect x="276.6" y="47.4" width="16.8" height="7.6" fill="#fdfdfd"/>
<path d="M276.6 47.4 V55 M293.4 47.4 V55" stroke="#808080" stroke-width="0.9"/>
<path d="M276.6 55 H293.4" stroke="#8a8a8a" stroke-width="1.1"/>
<path d="M278.6 49.7 H291.4 M278.6 52.1 H291.4" stroke="#b5b5b5" stroke-width="0.9"/>
<rect x="279.6" y="61.5" width="17.0" height="7.6" fill="#fdfdfd"/>
<path d="M279.6 61.5 V69.2 M296.6 61.5 V69.2" stroke="#808080" stroke-width="0.9"/>
<path d="M279.6 61.5 H296.6" stroke="#8a8a8a" stroke-width="1.1"/>
<path d="M281.6 64.6 H294.6 M281.6 67.0 H294.6" stroke="#b5b5b5" stroke-width="0.9"/>
<path d="M284.2 56.4 H286.4 L287.6 61.2" stroke="#3f7fc4" stroke-width="1.3" fill="none" stroke-linejoin="round"/>
<rect x="275.40" y="53.70" width="2.4" height="2.4" fill="#6f9be3"/>
<rect x="292.20" y="53.70" width="2.4" height="2.4" fill="#6f9be3"/>
<rect x="278.40" y="60.40" width="2.4" height="2.4" fill="#6f9be3"/>
<rect x="295.40" y="60.40" width="2.4" height="2.4" fill="#6f9be3"/>
<rect x="315.8" y="49.6" width="12.2" height="16.8" fill="#fdfdfd" stroke="#858585" stroke-width="0.9"/>
<text x="316.9" y="58.9" font-size="6.6" font-weight="bold" fill="#4a80c8">A</text>
<path d="M323.2 54.6 H326.2 M323.2 56.6 H326.2 M323.2 58.6 H326.2 M317.6 61.4 H326.2 M317.6 63.6 H326.2" stroke="#b8b8b8" stroke-width="0.8"/>
<path d="M309.4 57.8 H312.4" stroke="#3f7fc4" stroke-width="1.0" fill="none"/><path d="M311.6 55.8 L314.0 57.8 L311.6 59.8 Z" fill="#3f7fc4"/>
<path d="M333.4 57.8 H330.4" stroke="#3f7fc4" stroke-width="1.0" fill="none"/><path d="M331.2 55.8 L328.8 57.8 L331.2 59.8 Z" fill="#3f7fc4"/>
<rect x="314.60" y="48.40" width="2.4" height="2.4" fill="#6f9be3"/>
<rect x="326.80" y="48.40" width="2.4" height="2.4" fill="#6f9be3"/>
<rect x="314.60" y="65.20" width="2.4" height="2.4" fill="#6f9be3"/>
<rect x="326.80" y="65.20" width="2.4" height="2.4" fill="#6f9be3"/>
<path d="M345.4 49.6 H361.8 V53.4 C361.8 55.2 357.6 54.4 357.6 56.4 V59.6 C357.6 61.6 361.8 60.8 361.8 62.6 V66.4 H345.4 Z" fill="#fdfdfd" stroke="#858585" stroke-width="1.0"/>
<path d="M347.4 52.2 H359.4 M347.4 54.8 H355.0 M347.4 57.4 H354.4 M347.4 60.0 H355.0 M347.4 63.4 H359.4" stroke="#b8b8b8" stroke-width="0.9"/>
<rect x="344.20" y="48.40" width="2.4" height="2.4" fill="#6f9be3"/>
<rect x="360.40" y="48.40" width="2.4" height="2.4" fill="#6f9be3"/>
<rect x="344.20" y="65.20" width="2.4" height="2.4" fill="#6f9be3"/>
<rect x="360.40" y="65.20" width="2.4" height="2.4" fill="#6f9be3"/>
<rect x="384.8" y="48.0" width="9.6" height="9.2" fill="#f9f9f9" stroke="#c6c6c6" stroke-width="1"/>
<rect x="396.4" y="59.4" width="9.2" height="9.0" fill="#f9f9f9" stroke="#c6c6c6" stroke-width="1"/>
<rect x="389.8" y="52.7" width="10.7" height="10.7" fill="#c6e2b2"/>
<rect x="423.9" y="52.7" width="10.7" height="10.7" fill="#c6e2b2"/>
<rect x="418.7" y="48.0" width="9.6" height="9.2" fill="#f9f9f9" stroke="#c6c6c6" stroke-width="1"/>
<rect x="430.3" y="59.4" width="9.2" height="9.0" fill="#f9f9f9" stroke="#c6c6c6" stroke-width="1"/>
<path d="M450.9 58.3 H472.9" stroke="#c9c9c9" stroke-width="0.9"/>
<rect x="455.3" y="53.0" width="5.1" height="10.9" fill="#c6e2b2"/>
<rect x="463.3" y="51.8" width="5.4" height="13.5" fill="#f9f9f9" stroke="#c4c4c4" stroke-width="1"/>
<path d="M484.4 48.0 L484.9 57.3 L480.9 57.3 Z" fill="#cfe4ba"/>
<path d="M486.6 57.3 L491.8 57.3 L486.6 52.6 Z" fill="none" stroke="#c4c4c4" stroke-width="0.8"/>
<path d="M486.4 49.2 C489.6 49.0 491.6 51.2 491.4 54.4" fill="none" stroke="#c4c4c4" stroke-width="0.9"/>
<rect x="484.3" y="63.6" width="8.0" height="7.8" fill="#fafafa" stroke="#c2c2c2" stroke-width="0.9"/>
<rect x="480.8" y="70.0" width="6.8" height="4.4" fill="#fafafa" stroke="#c2c2c2" stroke-width="0.9"/>
<path d="M487.8 68.2 L491.0 65.0 M488.8 64.9 H491.1 V67.2" stroke="#9dbbe4" stroke-width="0.9" fill="none"/>
<rect x="484.3" y="82.7" width="5.4" height="5.4" fill="#fdfdfd" stroke="#757575" stroke-width="0.8"/>
<path d="M486.2 80.6 H491.6 V85.6" stroke="#4586d4" stroke-width="0.9" fill="none"/>
<path d="M481.6 85.4 V90.4 H486.6" stroke="#4586d4" stroke-width="0.9" fill="none"/>
<path d="M490.2 84.6 L491.6 86.2 L493.0 84.6 M482.9 86.6 L481.6 85.0 L480.3 86.6" stroke="#3b80d0" stroke-width="0.8" fill="none"/>
<path d="M548.2 52.8 V63.0 M558.2 52.8 V63.0" stroke="#c4c4c4" stroke-width="0.9"/>
<path d="M547.6 52.6 H558.8 M547.6 63.2 H558.8" stroke="#d0d0d0" stroke-width="0.8" stroke-dasharray="1.2 1"/>
<rect x="550.6" y="54.8" width="5.0" height="4.8" fill="#fcfcfc" stroke="#c0c0c0" stroke-width="0.8"/>
<circle cx="555.0" cy="58.8" r="2.1" fill="#fcfcfc" stroke="#c0c0c0" stroke-width="0.8"/>
<rect x="547.9" y="74.6" width="6.6" height="6.6" fill="#fbfbfb" stroke="#c8cedc" stroke-width="0.8" stroke-dasharray="1.3 1"/>
<rect x="551.6" y="78.6" width="6.8" height="6.6" fill="#fbfbfb" stroke="#c8cedc" stroke-width="0.8" stroke-dasharray="1.3 1"/>
<path d="M608.6 52.8 V63.0 M618.8 52.8 V58.0" stroke="#c6c6c6" stroke-width="0.9"/>
<path d="M608.0 52.7 H619.4 M608.0 63.1 H613" stroke="#d2d2d2" stroke-width="0.8" stroke-dasharray="1.2 1"/>
<path d="M614.6 59.2 V57.6 C614.6 55.4 618.2 55.4 618.2 57.6 V59.2" stroke="#c4c4c4" stroke-width="0.9" fill="none"/>
<rect x="612.8" y="58.9" width="7.0" height="4.5" fill="#f1da7e"/>
<path d="M616.3 59.6 V62.8" stroke="#f8ecb8" stroke-width="0.7"/>
<path d="M608.6 75.0 V85.6 M618.8 75.0 V85.6" stroke="#c6c6c6" stroke-width="0.9"/>
<path d="M608.0 74.9 H619.4 M608.0 85.8 H619.4" stroke="#d4d4d4" stroke-width="0.8"/>
<path d="M608.8 85.2 L618.6 75.6" stroke="#ea8585" stroke-width="0.9"/>
<circle cx="7.0" cy="119.6" r="2.6" fill="#b3b3f3" opacity="0.8"/>
<path d="M6.2 124.2 V120.6 C6.2 119.4 7.9 119.4 7.9 120.6 V123.0 C9.6 122.6 12.6 123.2 12.6 125.6 C12.6 128.2 10.6 129.4 8.2 129.4 C5.6 129.4 3.4 127.6 3.4 125.4 C3.4 124.2 4.6 123.6 6.2 124.2 Z" fill="#fdfdfd" stroke="#7c7c7c" stroke-width="0.9"/>
<path d="M20.6 127.8 V120.0 H24.6 L25.8 121.2 H30.2 V123.0" fill="#f8d58c" stroke="#dfa247" stroke-width="0.9" stroke-linejoin="round"/>
<path d="M20.6 127.9 L22.6 123.0 H32.0 L30.0 127.9 Z" fill="#fce3a6" stroke="#dfa247" stroke-width="0.9" stroke-linejoin="round"/>
<rect x="39.6" y="118.6" width="9.9" height="9.9" rx="0.8" fill="#6f90e2" stroke="#5a78c8" stroke-width="0.8"/>
<rect x="42.6" y="119.0" width="5.0" height="2.9" fill="#f4f6fc"/>
<rect x="42.2" y="125.3" width="5.4" height="2.8" fill="#f4f6fc"/>
<path d="M62.2 128.6 C66.4 125.6 67.8 121.6 65.0 119.6 C63.2 118.4 61.2 119.4 59.8 121.2" fill="none" stroke="#3f86c8" stroke-width="1.3" stroke-linecap="round"/>
<path d="M58.2 119.6 L62.4 120.6 L59.0 123.6 Z" fill="#3f86c8"/>
<path d="M77.8 117.8 V127.0 L80.2 125.0 L82.0 128.8 L83.4 128.2 L81.7 124.6 L84.6 124.3 Z" fill="#fdfdfd" stroke="#919191" stroke-width="0.9" stroke-linejoin="round"/>
<path d="M97.6 129.2 C96.8 127.4 95.6 125.8 95.8 124.0 C96.0 123.2 96.9 123.2 97.3 124.0 V120.0 C97.3 119.0 98.7 119.0 98.7 120.0 V118.6 C98.7 117.6 100.3 117.6 100.3 118.6 V119.0 C100.3 118.0 101.9 118.0 101.9 119.0 V119.8 C101.9 119.0 103.3 119.0 103.3 119.8 V121.4 C103.7 120.6 104.8 120.8 104.8 121.8 V125.6 C104.8 127.0 104.2 128.2 103.6 129.2 Z" fill="#dadada" stroke="#8e8e8e" stroke-width="0.9" stroke-linejoin="round"/>
<path d="M98.0 123.4 H103.6 V126.2 C103.6 127.2 103.0 127.8 102.4 127.8 H98.8 C98.2 127.2 98.0 126.4 98.0 125.6 Z" fill="#fbfbfb"/>
<path d="M97.4 128.6 H103.8" stroke="#8e8e8e" stroke-width="0.9"/>
<text x="113.0" y="127.6" font-family="'Liberation Serif', serif" font-size="13.6" fill="#4d4d4d" stroke="#4d4d4d" stroke-width="0.25" textLength="9.0" lengthAdjust="spacingAndGlyphs">T</text>
<text x="130.0" y="127.6" font-family="'Liberation Serif', serif" font-size="13.6" fill="#4d4d4d" stroke="#4d4d4d" stroke-width="0.25" textLength="8.8" lengthAdjust="spacingAndGlyphs">T</text>
<path d="M140.6 120.2 L141.5 122.2 L143.5 123.2 L141.5 124.2 L140.6 126.2 L139.7 124.2 L137.7 123.2 L139.7 122.2 Z" fill="#ffd632"/>
<circle cx="140.6" cy="123.2" r="1.5" fill="#ffd632"/>
<path d="M150.7 121.3 H154.8" stroke="#555" stroke-width="0.9"/>
<path d="M150.6 122.9 H154.9 L152.75 125.5 Z" fill="#555"/>
<path d="M136.0 141.6 V147.6" stroke="#8a8a8a" stroke-width="0.8" stroke-dasharray="0.9 0.8"/>
<ellipse cx="136.0" cy="140.3" rx="1.9" ry="1.0" fill="#f4f4f4" stroke="#3a3a3a" stroke-width="0.8"/>
<rect x="134.2" y="147.7" width="3.6" height="5.0" rx="1.2" fill="#9a9a9a" stroke="#333" stroke-width="0.9"/>
<path d="M881.2 147.2 L883.0 149.3 L881.2 151.4 L879.4 149.3 Z" fill="#f4f4f4" stroke="#3a3a3a" stroke-width="0.8"/>
<path d="M881.2 151.4 V153.4" stroke="#444" stroke-width="0.9"/>
<path d="M3.6 536.2 V543.6" stroke="#a9c4ea" stroke-width="1.2"/><path d="M11.2 536.2 V543.6 L5.2 539.9 Z" fill="#a9c4ea"/>
<path d="M26.8 536.4 V543.4 L20.6 539.9 Z" fill="#a9c4ea"/>
<path d="M65.4 536.2 V543.6 L71.8 539.9 Z" fill="#3c7ed6"/>
<path d="M81.4 536.2 V543.6 L87.4 539.9 Z" fill="#3c7ed6"/><path d="M88.6 536.2 V543.6" stroke="#3c7ed6" stroke-width="1.2"/>
<path d="M97.2 539.9 L102.0 536.0 V538.2 H105.0 V541.6 H102.0 V543.8 Z" fill="#3c7ed6"/><rect x="105.6" y="538.2" width="1.3" height="3.4" fill="#3c7ed6"/>
<path d="M123.4 539.9 L118.6 536.0 V538.2 H115.6 V541.6 H118.6 V543.8 Z" fill="#a9c4ea"/><rect x="113.6" y="538.2" width="1.3" height="3.4" fill="#a9c4ea"/>
<rect x="785.6" y="534.8" width="10.4" height="9.2" fill="#f8fafe" stroke="#6f9ad8" stroke-width="0.8"/><rect x="785.2" y="534.4" width="11.2" height="1.7" fill="#6f9ad8"/>
<rect x="802.0" y="534.8" width="10.4" height="9.2" fill="#f8fafe" stroke="#6f9ad8" stroke-width="0.8"/><rect x="801.6" y="534.4" width="11.2" height="1.7" fill="#6f9ad8"/>
<rect x="818.4" y="534.8" width="10.4" height="9.2" fill="#f8fafe" stroke="#6f9ad8" stroke-width="0.8"/><rect x="818.0" y="534.4" width="11.2" height="1.7" fill="#6f9ad8"/>
<rect x="835.0" y="534.8" width="10.4" height="9.2" fill="#f8fafe" stroke="#6f9ad8" stroke-width="0.8"/><rect x="834.6" y="534.4" width="11.2" height="1.7" fill="#6f9ad8"/>
<text x="787.7" y="542.5" font-size="5.4" fill="#4a80cc" font-weight="bold" textLength="6.0" lengthAdjust="spacingAndGlyphs">1:1</text>
<path d="M803.4 540.2 L805.4 538.6 V541.8 Z M811.0 540.2 L809.0 538.6 V541.8 Z" fill="#4a80cc"/><path d="M805.8 540.2 H808.6" stroke="#4a80cc" stroke-width="0.8" stroke-dasharray="0.8 0.6"/>
<rect x="821.2" y="537.2" width="6.0" height="6.0" fill="#d9d9d9"/>
<path d="M838.0 537.2 V543.4 M840.4 537.2 V543.4 M842.8 537.2 V543.4" stroke="#bdbdbd" stroke-width="1.3"/>
<path d="M882.8 539.6 H888.2" stroke="#9a9a9a" stroke-width="0.9"/>
<path d="M898.4 539.6 H960.4" stroke="#cfcfcf" stroke-width="0.9"/>
<rect x="934.6" y="533.6" width="2.6" height="12.2" fill="#f4f4f4" stroke="#b8b8b8" stroke-width="0.8"/>
<path d="M969.8 539.6 H975.4 M972.6 536.8 V542.4" stroke="#9a9a9a" stroke-width="0.9"/>
<path d="M1017.6 541.6 h1 M1015.6 543.6 h1 M1017.6 543.6 h1 M1013.6 545.6 h1 M1015.6 545.6 h1 M1017.6 545.6 h1" stroke="#b0b0b0" stroke-width="1"/>
</g>
</svg>
</body>
</html>
